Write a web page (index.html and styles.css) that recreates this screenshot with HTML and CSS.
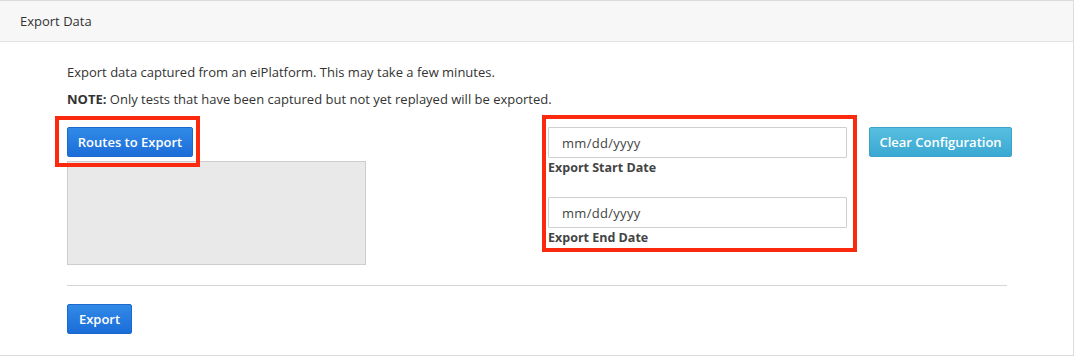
FILE: index.html
```html
<!DOCTYPE html>
<html lang="en">
<head>
<meta charset="utf-8">
<title>Export Data</title>
<link rel="stylesheet" href="styles.css">
</head>
<body>
<div class="panel">
  <div class="panel-heading">Export Data</div>
  <div class="panel-body">
    <p class="intro">Export data captured from an eiPlatform. This may take a few minutes.</p>
    <p class="intro"><strong>NOTE:</strong> Only tests that have been captured but not yet replayed will be exported.</p>
    <div class="config-row">
      <div class="routes-col">
        <button class="btn btn-primary">Routes to Export</button>
        <div class="routes-list"></div>
        <div class="annot annot-routes"></div>
      </div>
      <div class="dates-col">
        <input class="date-input" type="text" placeholder="mm/dd/yyyy">
        <label class="date-label">Export Start Date</label>
        <input class="date-input date-input-end" type="text" placeholder="mm/dd/yyyy">
        <label class="date-label">Export End Date</label>
        <div class="annot annot-dates"></div>
      </div>
      <div class="clear-col">
        <button class="btn btn-info">Clear Configuration</button>
      </div>
    </div>
    <hr class="divider">
    <button class="btn btn-primary">Export</button>
  </div>
</div>
</body>
</html>
```
FILE: styles.css
```css
html, body {
  margin: 0;
  padding: 0;
  background: #fff;
}
body {
  font-family: "Open Sans", "Liberation Sans", sans-serif;
  font-size: 13px;
  color: #333;
}
.panel {
  margin-left: -1px;
  width: 1073px;
  border: 1px solid #dcdcdc;
  background: #fff;
}
.panel-heading {
  height: 40px;
  line-height: 40px;
  padding-left: 20px;
  background: #f7f7f7;
  border-bottom: 1px solid #e3e3e3;
  font-size: 13px;
  color: #333;
}
.panel-body {
  padding: 21px 0 21px 67px;
}
.intro {
  margin: 0 0 9px;
  line-height: 18px;
}
.intro strong {
  font-weight: 700;
}
.config-row {
  display: flex;
  align-items: flex-start;
  margin-top: 19px;
}
.routes-col {
  position: relative;
  width: 481px;
  display: flex;
  flex-direction: column;
  align-items: flex-start;
}
.btn {
  font-family: "Open Sans", "Liberation Sans", sans-serif;
  font-size: 13px;
  font-weight: 600;
  color: #fff;
  height: 30px;
  padding: 0;
  white-space: nowrap;
  border-radius: 2px;
  cursor: pointer;
}
.btn-primary {
  background: linear-gradient(#318ae7, #1b6dd8);
  border: 1px solid #1d68cc;
}
.btn-info {
  background: linear-gradient(#57bfe0, #3aa8d2);
  border: 1px solid #3aa3cb;
}
.routes-col .btn {
  width: 126px;
}
.routes-list {
  margin-top: 4px;
  width: 299px;
  height: 104px;
  box-sizing: border-box;
  background: #e9e9e9;
  border: 1px solid #cdcdcd;
}
.dates-col {
  position: relative;
  width: 299px;
  display: flex;
  flex-direction: column;
}
.date-input {
  box-sizing: border-box;
  width: 299px;
  height: 31px;
  border: 1px solid #cfcfcf;
  border-radius: 1px;
  padding: 0 13px;
  font-family: "Open Sans", "Liberation Sans", sans-serif;
  font-size: 13px;
  color: #333;
  background: #fff;
}
.date-input::placeholder {
  color: #444;
  letter-spacing: 0.3px;
}
.date-input-end {
  margin-top: 19px;
}
.date-label {
  font-size: 12.5px;
  font-weight: 700;
  line-height: 20px;
  color: #444;
}
.clear-col {
  margin-left: 22px;
}
.clear-col .btn {
  width: 143px;
}
.divider {
  margin: 20px 0 18px;
  width: 940px;
  border: 0;
  border-top: 1px solid #d6d6d6;
  height: 0;
}
.panel-body > .btn {
  width: 65px;
}
.annot {
  position: absolute;
  box-sizing: border-box;
  border: 4px solid #fb2a0f;
  pointer-events: none;
}
.annot-routes {
  left: -12px;
  top: -11px;
  width: 145px;
  height: 51px;
}
.annot-dates {
  left: -6px;
  top: -12px;
  width: 315px;
  height: 137px;
}
```
